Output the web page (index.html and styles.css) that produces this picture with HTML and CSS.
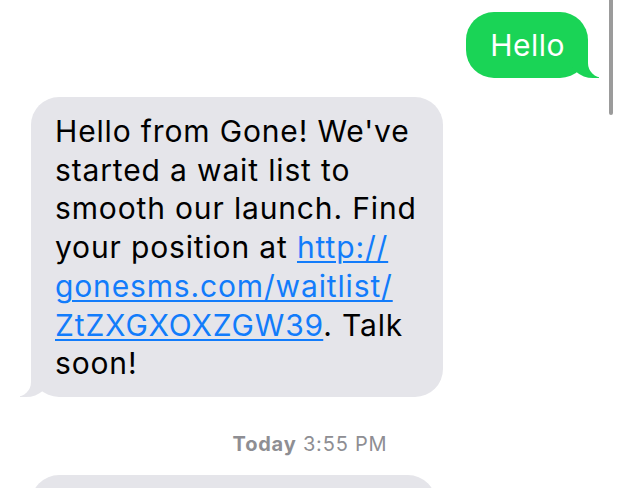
FILE: index.html
```html
<!DOCTYPE html>
<html lang="en">
<head>
<meta charset="utf-8">
<title>Messages</title>
<link rel="stylesheet" href="styles.css">
</head>
<body>
<div class="thread">
  <div class="bubble me">Hello</div>
  <div class="bubble them">Hello from Gone! We've<br>started a wait list to<br>smooth our launch. Find<br>your position at <a href="#" class="link">http://</a><br><a href="#" class="link">gonesms.com/waitlist/</a><br><a href="#" class="link">ZtZXGXOXZGW39</a>. Talk<br>soon!</div>
  <div class="stamp"><b>Today</b> 3:55 PM</div>
  <div class="bubble them next"></div>
</div>
<div class="scrollbar"></div>
</body>
</html>
```
FILE: styles.css
```css
html, body {
  margin: 0;
  padding: 0;
  background: #ffffff;
  height: 488px;
  overflow: hidden;
}
body {
  position: relative;
  font-family: Inter, "Liberation Sans", Arial, sans-serif;
}
.thread {
  display: flex;
  flex-direction: column;
  padding-top: 12px;
}
.bubble {
  position: relative;
  font-size: 30px;
  line-height: 38.7px;
  border-radius: 28px;
  white-space: nowrap;
}
.me {
  align-self: flex-end;
  margin-right: 32px;
  background: #1ad456;
  color: #ffffff;
  padding: 14px 23px 14px 24px;
  line-height: 38px;
  letter-spacing: 0.5px;
}
.me::before {
  content: "";
  position: absolute;
  bottom: 0;
  right: -11px;
  width: 30px;
  height: 36px;
  background: #1ad456;
  border-bottom-left-radius: 24px 21px;
}
.me::after {
  content: "";
  position: absolute;
  bottom: 0;
  right: -39px;
  width: 39px;
  height: 36px;
  background: #ffffff;
  border-bottom-left-radius: 15px;
}
.them {
  align-self: flex-start;
  margin-left: 31px;
  margin-top: 19px;
  width: 364px;
  background: #e5e5ea;
  color: #000000;
  padding: 15px 24px 14px;
  letter-spacing: 0.85px;
}
.them::before {
  content: "";
  position: absolute;
  bottom: 0;
  left: -11px;
  width: 30px;
  height: 36px;
  background: #e5e5ea;
  border-bottom-right-radius: 24px 21px;
}
.them::after {
  content: "";
  position: absolute;
  bottom: 0;
  left: -39px;
  width: 39px;
  height: 36px;
  background: #ffffff;
  border-bottom-right-radius: 15px;
}
.next {
  width: 357px;
  height: 60px;
  padding: 0 24px;
}
.next::before, .next::after {
  display: none;
}
.link {
  color: #127cfb;
  text-decoration: underline;
  text-decoration-thickness: 2px;
  text-underline-offset: 3px;
}
.stamp {
  margin-top: 35px;
  text-align: center;
  font-size: 20px;
  line-height: 24px;
  color: #8e8e93;
  letter-spacing: 0.8px;
}
.stamp b {
  font-weight: 700;
}
.scrollbar {
  position: absolute;
  top: 0;
  right: 7px;
  width: 4px;
  height: 115px;
  background: #9b9b9b;
  border-radius: 0 0 2px 2px;
}
```
